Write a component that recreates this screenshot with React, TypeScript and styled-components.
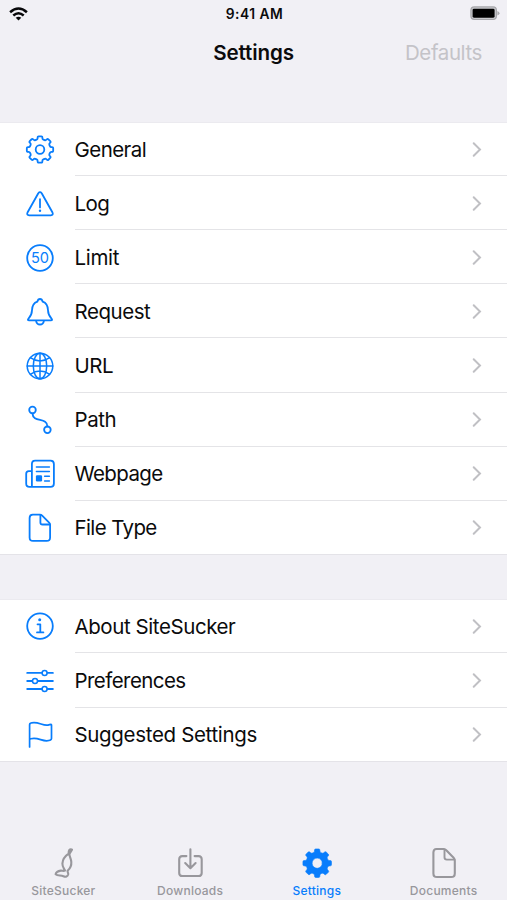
import React from "react";
import styled, { createGlobalStyle } from "styled-components";

const BLUE = "#087dfc";

const GlobalStyle = createGlobalStyle`
  html, body { margin: 0; padding: 0; background: #f1f0f5; }
  * { box-sizing: border-box; }
`;

const Screen = styled.main`
  width: 507px;
  height: 900px;
  display: flex;
  flex-direction: column;
  overflow: hidden;
  background: #f1f0f5;
  color: #0b0b0c;
  font-family: Inter, "Liberation Sans", sans-serif;
`;

const StatusBar = styled.div`
  height: 28px;
  padding: 0 7px 0 9px;
  display: grid;
  grid-template-columns: 1fr auto 1fr;
  align-items: center;
`;

const Clock = styled.span`
  font-size: 13.8px;
  font-weight: 600;
  letter-spacing: 0.5px;
  line-height: 28px;
`;

const StatusEnd = styled.span`
  display: flex;
  justify-content: flex-end;
  padding-bottom: 2px;
`;

const NavBar = styled.header`
  height: 93.6px;
  padding: 8px 25px 0 25px;
  display: grid;
  grid-template-columns: 1fr auto 1fr;
  align-items: start;
  line-height: 34px;
`;

const Title = styled.h1`
  grid-column: 2;
  margin: 0;
  font-size: 20.6px;
  font-weight: 600;
  letter-spacing: -0.12px;
`;

const NavAction = styled.span`
  justify-self: end;
  font-size: 20.5px;
  letter-spacing: -0.4px;
  color: #c4c3c8;
`;

const Group = styled.section<{ $gap?: number }>`
  margin-top: ${(p) => p.$gap ?? 0}px;
  background: #fff;
  border-top: 1px solid #ebeaef;
  border-bottom: 1px solid #e4e3e8;
`;

const Row = styled.div`
  height: 54.14px;
  padding-left: 22px;
  display: flex;
  align-items: center;
  &:last-child > div { border-bottom-color: transparent; }
  &:first-child { height: 53.5px; }
  &:last-child { height: 53.3px; }
`;

const RowBody = styled.div`
  flex: 1;
  height: 100%;
  margin-left: 16.5px;
  padding: 2px 24px 0 0;
  display: flex;
  align-items: center;
  justify-content: space-between;
  border-bottom: 1px solid #e4e4e7;
`;

const RowLabel = styled.span<{ $spacing: number }>`
  font-size: 20.5px;
  line-height: 28px;
  letter-spacing: ${(p) => p.$spacing}px;
`;

const TabBar = styled.nav`
  margin-top: auto;
  height: 57px;
  display: grid;
  grid-template-columns: repeat(4, 1fr);
`;

const Tab = styled.div<{ $active?: boolean }>`
  display: flex;
  flex-direction: column;
  align-items: center;
  padding-top: 2px;
  color: ${(p) => (p.$active ? BLUE : "#98979c")};
`;

const TabLabel = styled.span`
  margin-top: 2px;
  font-size: 12px;
  font-weight: 500;
  line-height: 16px;
  letter-spacing: 0.24px;
`;

const Glyph = styled.svg`
  display: block;
  flex: none;
  fill: none;
  stroke: currentColor;
  stroke-width: 1.8;
  stroke-linecap: round;
  stroke-linejoin: round;
`;

const RowGlyph = styled(Glyph)`
  width: 36px;
  height: 36px;
  margin-top: 1px;
  color: ${BLUE};
`;

function gearPath(c: number, outer: number, inner: number, topHalf: number, baseHalf: number) {
  const pts: [number, number][] = [];
  for (let i = 0; i < 8; i++) {
    const mid = (i * Math.PI) / 4 - Math.PI / 2;
    const add = (r: number, a: number) => pts.push([c + r * Math.cos(mid + a), c + r * Math.sin(mid + a)]);
    add(inner, -baseHalf);
    add(outer, -topHalf);
    add(outer, topHalf);
    add(inner, baseHalf);
  }
  const n = pts.length;
  const toward = (a: [number, number], b: [number, number], d: number) => {
    const len = Math.hypot(b[0] - a[0], b[1] - a[1]);
    const t = Math.min(d / len, 0.48);
    return `${(a[0] + (b[0] - a[0]) * t).toFixed(2)} ${(a[1] + (b[1] - a[1]) * t).toFixed(2)}`;
  };
  let d = "";
  for (let i = 0; i < n; i++) {
    const p = pts[i];
    const prev = pts[(i + n - 1) % n];
    const next = pts[(i + 1) % n];
    d += `${i ? "L" : "M"}${toward(p, prev, 1.1)}Q${p[0].toFixed(2)} ${p[1].toFixed(2)} ${toward(p, next, 1.1)}`;
  }
  return d + "Z";
}

const icons: Record<string, React.ReactNode> = {
  general: (
    <g transform="translate(0 -0.5)">
      <path d={gearPath(18, 13.4, 10.6, 0.18, 0.22)} />
      <circle cx="18" cy="18" r="4.3" />
    </g>
  ),
  log: (
    <>
      <path d="M16.3 7.2Q18 5 19.7 7.2L30.5 26.5Q31.6 29.2 28.8 29.3H7.2Q4.4 29.2 5.5 26.5Z" />
      <path d="M18 13.2v8.2" />
      <circle cx="18" cy="24.8" r="1.2" fill="currentColor" stroke="none" />
    </>
  ),
  limit: (
    <>
      <circle cx="18" cy="18" r="12.8" />
      <text x="18" y="23.3" textAnchor="middle" fontSize="14.6" fontFamily="Inter, sans-serif" fontWeight="400" fill="currentColor" stroke="none" textLength="17.8">50</text>
    </>
  ),
  request: (
    <>
      <path d="M15.3 7.7Q16 5 18 5T20.7 7.7C24.6 9.1 25.9 12.6 26 16.3C26.1 21.2 27.7 22.8 29.5 24.6Q31 26.4 28.8 26.4H7.2Q5 26.4 6.5 24.6C8.3 22.8 9.9 21.2 10 16.3C10.1 12.6 11.4 9.1 15.3 7.7Z" />
      <path d="M14.1 26.8Q14.7 30.5 18 30.5T21.9 26.8" />
    </>
  ),
  url: (
    <g strokeWidth="1.5">
      <circle cx="18" cy="18" r="12.8" />
      <ellipse cx="18" cy="18" rx="6.7" ry="12.8" />
      <path d="M18 5.2v25.6M5.2 18h25.6M8.3 9.6Q18 16.3 27.7 9.6M8.3 26.4Q18 19.7 27.7 26.4" />
    </g>
  ),
  path: (
    <>
      <circle cx="10.5" cy="8" r="3.3" />
      <circle cx="25.4" cy="27.8" r="3.3" />
      <path d="M10.5 11.4C10.8 21.2 25.4 14.7 25.4 24.4" />
    </>
  ),
  webpage: (
    <>
      <path d="M9.9 30.8V8.1Q9.9 4.6 13.1 4.6H28.6Q31.9 4.6 31.9 8V27.4Q31.9 30.8 28.6 30.8H7.4Q4.2 30.8 4.2 27.4V17.8Q4.2 15.2 6.8 15.2H9.9" />
      <path strokeWidth="1.5" d="M14.4 11H27.4M14.4 15.5H27.4M22.6 20.3h4.8M22.6 25.1h4.8" />
      <rect x="13.9" y="19.3" width="6.2" height="6.2" rx="1.2" fill="currentColor" stroke="none" />
    </>
  ),
  file: (
    <>
      <path d="M10.8 4.6H17.8Q19.2 4.6 20.2 5.6L27.1 12.7Q28.1 13.7 28.1 15V27.4Q28.1 30.9 24.7 30.9H11Q7.6 30.9 7.6 27.4V8Q7.6 4.6 10.8 4.6Z" />
      <path d="M18.4 5V12.4Q18.4 14.5 20.5 14.5H27.8" />
    </>
  ),
  about: (
    <g transform="translate(0 -0.9)">
      <circle cx="18" cy="18" r="12.8" />
      <circle cx="17.7" cy="11.7" r="1.5" fill="currentColor" stroke="none" />
      <path d="M15.5 16.2h2.8v8M15 24.3h6.4" />
    </g>
  ),
  preferences: (
    <>
      <path d="M5.2 9.9h14.6M25.4 9.9h5.5M5.2 18H10.2M15.8 18h15.1M5.2 26h14.6M25.4 26h5.5" />
      <g strokeWidth="1.5">
        <circle cx="22.6" cy="9.9" r="2.5" />
        <circle cx="13" cy="18" r="2.5" />
        <circle cx="22.6" cy="26" r="2.5" />
      </g>
    </>
  ),
  flag: (
    <path strokeWidth="1.7" d="M7.6 30V7.7C7.6 6.2 9.2 5.7 12 5.7C17.4 5.7 20.2 8.2 24.6 8.2C27.4 8.2 29.5 6.5 29.5 8V21.6C29.5 23.1 27.3 23.8 24.6 23.8C19.8 23.8 17.3 21.3 12 21.3C9.2 21.3 7.6 22 7.6 22.5" />
  ),
};

interface Item {
  icon: string;
  label: string;
  spacing: number;
}

const settings: Item[] = [
  { icon: "general", label: "General", spacing: -0.55 },
  { icon: "log", label: "Log", spacing: -0.6 },
  { icon: "limit", label: "Limit", spacing: -0.3 },
  { icon: "request", label: "Request", spacing: -0.45 },
  { icon: "url", label: "URL", spacing: -0.5 },
  { icon: "path", label: "Path", spacing: -0.4 },
  { icon: "webpage", label: "Webpage", spacing: -0.62 },
  { icon: "file", label: "File Type", spacing: -0.62 },
];

const extras: Item[] = [
  { icon: "about", label: "About SiteSucker", spacing: -0.42 },
  { icon: "preferences", label: "Preferences", spacing: -0.56 },
  { icon: "flag", label: "Suggested Settings", spacing: -0.33 },
];

function SettingsRow({ icon, label, spacing }: Item) {
  return (
    <Row>
      <RowGlyph viewBox="0 0 36 36">{icons[icon]}</RowGlyph>
      <RowBody>
        <RowLabel $spacing={spacing}>{label}</RowLabel>
        <Glyph width="12" height="18" viewBox="0 0 12 18" color="#c0c0c4">
          <path strokeWidth="2" strokeLinejoin="miter" d="M2.7 2.2L9 8.5L2.7 14.8" />
        </Glyph>
      </RowBody>
    </Row>
  );
}

const tabs = [
  {
    label: "SiteSucker",
    art: (
      <path strokeWidth="2.1" d="M27 4.6C24.6 3.4 23.6 5.4 23.6 8.6C20.4 10.8 17.6 14.8 17.4 18.6C17.3 22 19 23.6 20 25.6C18.4 26.4 17.2 25.4 15.8 25.6C13.4 26 11 27.6 10.6 29.2C12.8 31 15.6 30 18.4 31.2C20.6 32.2 22.8 31.6 23.2 29.4C23.4 28 22.4 27 22.6 25.8C25.2 23.4 26.6 20.4 26.3 16.8C26.1 14 24.4 11.6 24.4 9L27 4.6" />
    ),
  },
  {
    label: "Downloads",
    art: (
      <path strokeWidth="2.1" d="M14.4 11.1H10.3Q7.2 11.1 7.2 14.2V27.9Q7.2 31 10.3 31H26.6Q29.7 31 29.7 27.9V14.2Q29.7 11.1 26.6 11.1H22.6M18.4 4.3V23M13.2 18.1L18.4 23.2L23.6 18.1" />
    ),
  },
  {
    label: "Settings",
    active: true,
    art: (
      <path
        fill="currentColor"
        fillRule="evenodd"
        strokeWidth="0.6"
        d={gearPath(18.2, 14.5, 11.3, 0.18, 0.25) + "M23.3 18.2A5.1 5.1 0 1 0 13.1 18.2A5.1 5.1 0 1 0 23.3 18.2Z"}
      />
    ),
  },
  {
    label: "Documents",
    art: (
      <>
        <path strokeWidth="2.1" d="M10.5 4H17.6Q19.2 4 20.3 5.2L27.6 12.8Q28.8 14 28.8 15.6V28.4Q28.8 32 25.2 32H11Q7.4 32 7.4 28.4V7.5Q7.4 4 10.5 4Z" />
        <path strokeWidth="1.9" d="M18.5 4.4V12.3Q18.5 14.6 20.8 14.6H28.5" />
      </>
    ),
  },
];

export default function App() {
  return (
    <>
      <GlobalStyle />
      <Screen>
        <StatusBar>
          <svg width="19" height="15" viewBox="0 0 19 15" fill="none" stroke="#08080a" strokeWidth="2.5">
            <path d="M1.1 5.2Q9.5-2.3 17.9 5.2M4.3 8.5Q9.5 3.9 14.7 8.5" />
            <path d="M6.7 10.8Q9.5 8.5 12.3 10.8L9.5 13.6Z" fill="#08080a" stroke="none" />
          </svg>
          <Clock>9:41 AM</Clock>
          <StatusEnd>
            <svg width="30" height="15" viewBox="0 0 30 15">
              <rect x="0.9" y="0.9" width="25.5" height="12.6" rx="3.4" fill="#c9c9cd" stroke="#a6a6aa" strokeWidth="1.2" />
              <rect x="2.6" y="2.7" width="22" height="9" rx="1.4" fill="#000" />
              <path d="M27.4 4.9Q29.5 5.7 29.5 7.2T27.4 9.5Z" fill="#aaaaae" />
            </svg>
          </StatusEnd>
        </StatusBar>
        <NavBar>
          <Title>Settings</Title>
          <NavAction>Defaults</NavAction>
        </NavBar>
        <Group>{settings.map((item) => <SettingsRow key={item.label} {...item} />)}</Group>
        <Group $gap={43.8}>{extras.map((item) => <SettingsRow key={item.label} {...item} />)}</Group>
        <TabBar>
          {tabs.map((tab) => (
            <Tab key={tab.label} $active={tab.active}>
              <Glyph width="36" height="36" viewBox="0 0 36 36">{tab.art}</Glyph>
              <TabLabel>{tab.label}</TabLabel>
            </Tab>
          ))}
        </TabBar>
      </Screen>
    </>
  );
}
